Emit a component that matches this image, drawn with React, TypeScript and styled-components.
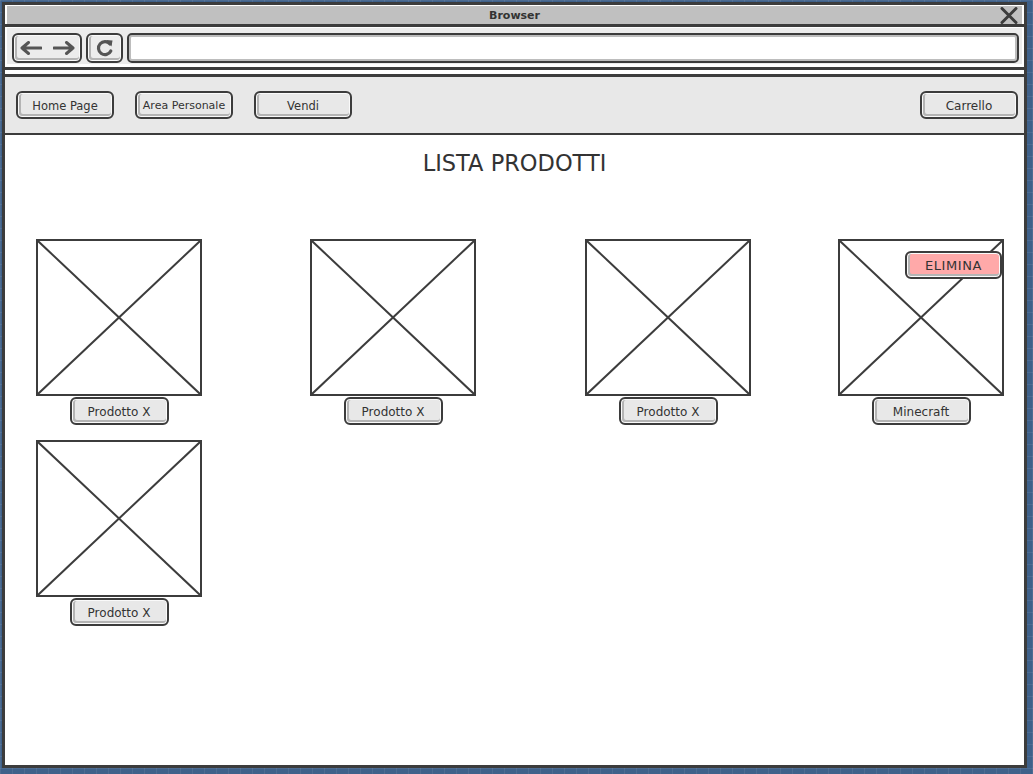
import styled, { createGlobalStyle } from "styled-components";

const ink = "#3c3c3c";
const sketchFont = `"Comic Sans MS", "DejaVu Sans", sans-serif`;

const GlobalStyle = createGlobalStyle`
  html, body {
    margin: 0;
    padding: 0;
    height: 100%;
  }
  body {
    background-color: #3f618a;
    background-image:
      linear-gradient(rgba(255, 255, 255, 0.07) 1px, transparent 1px),
      linear-gradient(90deg, rgba(255, 255, 255, 0.07) 1px, transparent 1px);
    background-size: 12px 12px;
    font-family: ${sketchFont};
    color: #333;
  }
`;

const Window = styled.div`
  box-sizing: border-box;
  margin: 2px 6px 0 2px;
  height: 766px;
  border: 3px solid ${ink};
  background: #fff;
  display: flex;
  flex-direction: column;
`;

const TitleBar = styled.div`
  margin: 1px 2px 0;
  height: 18px;
  background: #c0c0c0;
  display: grid;
  grid-template-columns: 1fr auto 1fr;
  align-items: center;
  padding: 0 4px;
  font-size: 11px;
  font-weight: 700;
  color: #333;
`;

const CloseIcon = styled.svg`
  justify-self: end;
  width: 18px;
  height: 17px;
`;

const Rule = styled.div`
  height: 3px;
  background: ${ink};
  flex: none;
`;

const Toolbar = styled.div`
  margin: 1px 2px 3px;
  height: 36px;
  box-sizing: border-box;
  background: #ececec;
  display: flex;
  align-items: flex-end;
  gap: 4px;
  padding: 0 3px 0 5px;
`;

const ToolButton = styled.div<{ $w: number }>`
  box-sizing: border-box;
  width: ${({ $w }) => $w}px;
  height: 30px;
  border: 2px solid ${ink};
  border-radius: 6px;
  box-shadow: inset 0 0 0 1px #fafafa, inset 1px -1px 0 2px #b4b4b4;
  display: flex;
  align-items: center;
  justify-content: center;
  gap: 11px;
  margin-bottom: 1px;
`;

const UrlField = styled.div`
  flex: 1;
  box-sizing: border-box;
  height: 30px;
  border: 2px solid ${ink};
  border-radius: 5px;
  background: #fff;
  box-shadow: inset 0 0 0 2px #bdbdbd;
  margin-bottom: 1px;
`;

const Spacer = styled.div`
  height: 4px;
  flex: none;
`;

const NavBar = styled.nav`
  height: 56px;
  background: #e8e8e8;
  display: flex;
  align-items: center;
  gap: 21px;
  padding: 0 6px 0 11px;
  border-bottom: 2px solid ${ink};
  flex: none;
`;

const SketchButton = styled.button<{
  $w: number;
  $bg?: string;
  $size?: number;
  $push?: boolean;
}>`
  box-sizing: border-box;
  width: ${({ $w }) => $w}px;
  height: 28px;
  margin-left: ${({ $push }) => ($push ? "auto" : "0")};
  padding: 1px 0 0;
  border: 2px solid ${ink};
  border-radius: 6px;
  background: ${({ $bg }) => $bg ?? "#e8e8e8"};
  box-shadow: inset 0 0 0 1px #fafafa, inset 1px -1px 0 2px #b4b4b4;
  font-family: ${sketchFont};
  font-size: ${({ $size }) => $size ?? 12}px;
  color: #333;
  white-space: nowrap;
  cursor: pointer;
`;

const Content = styled.main`
  flex: 1;
  background: #fff;
  padding: 15px 0 0 31px;
`;

const Heading = styled.h1`
  margin: 0 0 63px -31px;
  font-size: 22.5px;
  line-height: 26px;
  font-weight: 400;
  text-align: center;
  color: #333;
`;

const ProductGrid = styled.div`
  display: grid;
  grid-template-columns: 274px 275px 253px 166px;
  row-gap: 15px;
`;

const ProductCard = styled.div`
  width: 166px;
  display: flex;
  flex-direction: column;
  align-items: center;
`;

const Placeholder = styled.div`
  position: relative;
  box-sizing: border-box;
  width: 166px;
  height: 157px;
  border: 2px solid ${ink};
  background: #fff;

  svg {
    display: block;
    width: 100%;
    height: 100%;
  }
`;

const DeleteButton = styled(SketchButton)`
  position: absolute;
  top: 10px;
  right: 0;
  letter-spacing: 0.6px;
`;

const ProductLabel = styled(SketchButton)`
  margin-top: 1px;
`;

const Arrow = ({ dir }: { dir: "left" | "right" }) => (
  <svg
    width="22"
    height="14"
    viewBox="0 0 22 14"
    style={{ transform: dir === "right" ? "scaleX(-1)" : undefined }}
  >
    <path
      d="M2 7 H21 M8.5 1.5 L2 7 L8.5 12.5"
      fill="none"
      stroke="#555"
      strokeWidth="3"
      strokeLinecap="round"
      strokeLinejoin="round"
    />
  </svg>
);

const Refresh = () => (
  <svg width="18" height="20" viewBox="0 0 18 20">
    <path
      d="M14 6 A6.5 6.5 0 1 0 14.8 13"
      fill="none"
      stroke="#555"
      strokeWidth="3.2"
      strokeLinecap="round"
    />
    <path d="M10 2 L16.5 2.5 L15.5 8.5 Z" fill="#555" />
  </svg>
);

const Cross = () => (
  <svg viewBox="0 0 100 100" preserveAspectRatio="none">
    <line x1="0" y1="0" x2="100" y2="100" stroke={ink} strokeWidth="2" vectorEffect="non-scaling-stroke" />
    <line x1="100" y1="0" x2="0" y2="100" stroke={ink} strokeWidth="2" vectorEffect="non-scaling-stroke" />
  </svg>
);

type Product = { name: string; deletable?: boolean };

const products: Product[] = [
  { name: "Prodotto X" },
  { name: "Prodotto X" },
  { name: "Prodotto X" },
  { name: "Minecraft", deletable: true },
  { name: "Prodotto X" },
];

const App = () => {
  return (
    <>
      <GlobalStyle />
      <Window>
        <TitleBar>
          <span />
          <span>Browser</span>
          <CloseIcon viewBox="0 0 18 17">
            <path
              d="M2 1.5 L16 15.5 M16 1.5 L2 15.5"
              stroke={ink}
              strokeWidth="3"
              strokeLinecap="round"
            />
          </CloseIcon>
        </TitleBar>
        <Rule />
        <Toolbar>
          <ToolButton $w={70}>
            <Arrow dir="left" />
            <Arrow dir="right" />
          </ToolButton>
          <ToolButton $w={37}>
            <Refresh />
          </ToolButton>
          <UrlField />
        </Toolbar>
        <Rule />
        <Spacer />
        <Rule />
        <NavBar>
          <SketchButton $w={98} $size={11.5}>
            Home Page
          </SketchButton>
          <SketchButton $w={98} $size={11}>
            Area Personale
          </SketchButton>
          <SketchButton $w={98} $size={11.5}>
            Vendi
          </SketchButton>
          <SketchButton $w={98} $size={12} $push>
            Carrello
          </SketchButton>
        </NavBar>
        <Content>
          <Heading>LISTA PRODOTTI</Heading>
          <ProductGrid>
            {products.map((p, i) => (
              <ProductCard key={i}>
                <Placeholder>
                  <Cross />
                  {p.deletable && (
                    <DeleteButton $w={97} $bg="#ffa9a9" $size={13}>
                      ELIMINA
                    </DeleteButton>
                  )}
                </Placeholder>
                <ProductLabel $w={99}>{p.name}</ProductLabel>
              </ProductCard>
            ))}
          </ProductGrid>
        </Content>
      </Window>
    </>
  );
};

export default App;
